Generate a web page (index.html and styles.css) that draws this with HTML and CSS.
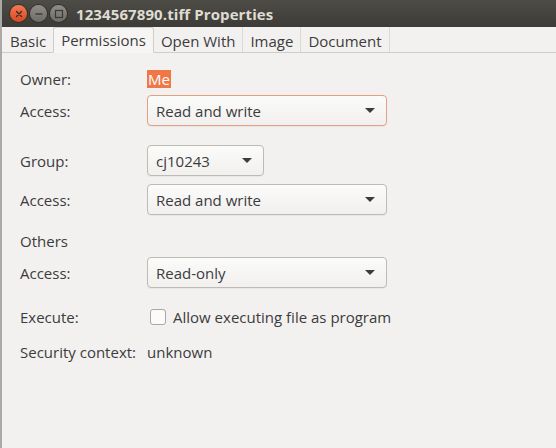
FILE: index.html
```html
<!DOCTYPE html>
<html>
<head>
<meta charset="utf-8">
<link rel="stylesheet" href="styles.css">
</head>
<body>
<div class="screen">
  <div class="desk"></div>
  <div class="window">
    <div class="titlebar">
      <div class="wbtns">
        <span class="wbtn close">
          <svg width="16" height="16" viewBox="0 0 16 16"><path d="M5.5 5.5l5 5M10.5 5.5l-5 5" stroke="#3a2a22" stroke-width="1.4" stroke-linecap="round"/></svg>
        </span>
        <span class="wbtn">
          <svg width="16" height="16" viewBox="0 0 16 16"><path d="M4.5 8h7" stroke="#3a3934" stroke-width="1.4"/></svg>
        </span>
        <span class="wbtn">
          <svg width="16" height="16" viewBox="0 0 16 16"><rect x="4.5" y="4.5" width="7" height="7" fill="none" stroke="#3a3934" stroke-width="1.2"/></svg>
        </span>
      </div>
      <div class="title">1234567890.tiff Properties</div>
    </div>
    <div class="tabs">
      <div class="tab">Basic</div>
      <div class="tab active">Permissions</div>
      <div class="tab">Open With</div>
      <div class="tab">Image</div>
      <div class="tab">Document</div>
    </div>
    <div class="content">
      <div class="row r-owner"><span class="label">Owner:</span><span class="sel">Me</span></div>
      <div class="row r-acc1"><span class="label">Access:</span><div class="combo wide focus"><span>Read and write</span><i class="arrow"></i></div></div>
      <div class="row r-group"><span class="label">Group:</span><div class="combo narrow"><span>cj10243</span><i class="arrow"></i></div></div>
      <div class="row r-acc2"><span class="label">Access:</span><div class="combo wide"><span>Read and write</span><i class="arrow"></i></div></div>
      <div class="row r-others"><span class="label">Others</span></div>
      <div class="row r-acc3"><span class="label">Access:</span><div class="combo wide"><span>Read-only</span><i class="arrow"></i></div></div>
      <div class="row r-exec"><span class="label">Execute:</span><span class="check"></span><span class="checktext">Allow executing file as program</span></div>
      <div class="row r-sec"><span class="label">Security context:</span><span class="value">unknown</span></div>
    </div>
  </div>
</div>
</body>
</html>
```
FILE: styles.css
```css
html, body {
  margin: 0;
  padding: 0;
}
body {
  width: 556px;
  height: 448px;
  overflow: hidden;
  font-family: "Open Sans", "DejaVu Sans", sans-serif;
  font-size: 15px;
  color: #3c3c3c;
  background: #f2f1f0;
}
.screen {
  display: flex;
  height: 448px;
}
.desk {
  width: 2px;
  flex: none;
  background: #a9a9a6;
}
.window {
  flex: 1;
  display: flex;
  flex-direction: column;
  background: #f2f1f0;
}
.titlebar {
  height: 27px;
  flex: none;
  background: linear-gradient(#4e4c46, #3d3b37);
  display: flex;
  align-items: center;
}
.wbtns {
  display: flex;
  gap: 3px;
  margin-left: 8px;
}
.wbtn {
  width: 17px;
  height: 17px;
  border-radius: 50%;
  background: linear-gradient(#8f8d86, #6e6c66);
  display: flex;
  align-items: center;
  justify-content: center;
  box-shadow: 0 0 0 1px #33312d;
}
.wbtn.close {
  background: linear-gradient(#f27a55, #d8481f);
}
.title {
  margin-left: 9px;
  color: #dfdbd2;
  font-weight: bold;
  font-size: 15px;
  letter-spacing: 0.1px;
}
.tabs {
  height: 25px;
  flex: none;
  display: flex;
  border-bottom: 1px solid #cfcdc9;
  background: #f2f1f0;
}
.tab {
  padding: 0 7px;
  display: flex;
  align-items: center;
  border-right: 1px solid #dcdad6;
  color: #3c3c3c;
  padding-top: 2px;
}
.tab:first-child {
  padding-left: 8px;
}
.tab.active {
  background: #f6f5f4;
  border: 1px solid #cfcdc9;
  border-bottom: 1px solid #f6f5f4;
  border-radius: 3px 3px 0 0;
  margin-bottom: -1px;
  margin-left: -1px;
  padding: 0 7px;
}
.content {
  flex: 1;
  padding-left: 18px;
}
.row {
  display: flex;
  align-items: center;
}
.label {
  width: 127px;
  flex: none;
}
.sel {
  background: #f07746;
  color: #ffffff;
  padding: 0 1px;
  line-height: 18px;
}
.r-owner { margin-top: 15px; height: 22px; }
.r-acc1 { margin-top: 5px; }
.r-group { margin-top: 19px; }
.r-acc2 { margin-top: 8px; }
.r-others { margin-top: 15px; height: 22px; }
.r-acc3 { margin-top: 5px; }
.r-exec { margin-top: 16px; height: 26px; }
.r-sec { margin-top: 11px; height: 22px; }
.combo {
  height: 31px;
  box-sizing: border-box;
  border: 1px solid #bebab4;
  border-radius: 4px;
  background: linear-gradient(#fbfbfa, #f1f0ef);
  display: flex;
  align-items: center;
  padding-left: 8px;
  padding-right: 11px;
  justify-content: space-between;
  box-shadow: 0 1px 0 rgba(0,0,0,0.04);
}
.combo.focus {
  border-color: #e5a07e;
}
.combo.wide { width: 240px; }
.combo.narrow { width: 117px; }
.arrow {
  width: 0;
  height: 0;
  border-left: 5px solid transparent;
  border-right: 5px solid transparent;
  border-top: 5px solid #3c3c3c;
}
.check {
  width: 14px;
  height: 14px;
  border: 1px solid #aaa7a2;
  border-radius: 3px;
  background: #fbfbfa;
  margin-left: 3px;
  margin-right: 7px;
}
```
